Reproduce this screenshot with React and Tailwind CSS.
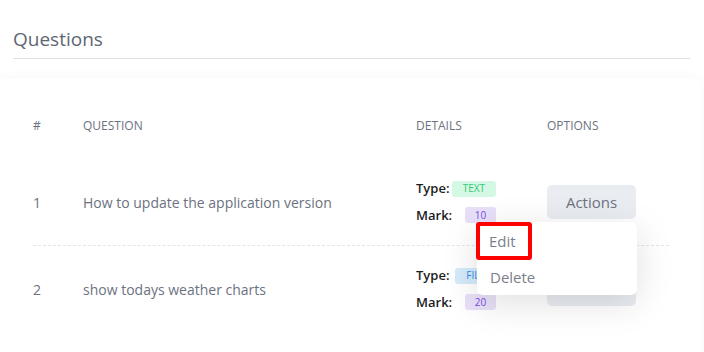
import React from 'react';

const questions = [
  { id: 1, text: 'How to update the application version', type: 'TEXT', mark: 10, typeClass: 'bg-[#d4f8e3] text-[#34c77b]' },
  { id: 2, text: 'show todays weather charts', type: 'FILE', mark: 20, typeClass: 'bg-[#d5ebfa] text-[#2e8ee8]' },
];

const Detail = ({ label, children }) => (
  <div className="flex w-[80px] items-center justify-between">
    <span className="text-[13px] font-semibold text-[#1b1d21]">{label}</span>
    {children}
  </div>
);

const ActionsMenu = () => (
  <div className="absolute right-[-1px] top-[37px] z-10 w-[160px] rounded-[6px] bg-white shadow-[0_8px_36px_rgba(0,0,0,0.13)]">
    <div className="flex h-[38px] items-center">
      <div className="ml-[-1px] flex h-[38px] w-[56px] items-center rounded-[3px] border-4 border-[#ff0000] pl-[9px] text-[15px] font-medium text-[#7b7f8b]">
        Edit
      </div>
    </div>
    <div className="flex h-[35px] items-center pl-[13px] text-[15px] font-medium text-[#7b7f8b]">Delete</div>
  </div>
);

const QuestionRow = ({ q, last, open }) => (
  <div
    className={`grid grid-cols-[50px_333px_131px_1fr] items-center ${
      last ? 'h-[86px]' : 'h-[87px] border-b border-dashed border-[#e3e5e9]'
    }`}
  >
    <span className="text-[14px] text-[#6c7280]">{q.id}</span>
    <span className="text-[14px] text-[#6c7280]">{q.text}</span>
    <div className="flex flex-col gap-[7px]">
      <Detail label="Type:">
        <span className={`flex h-[16px] items-center rounded-[3px] px-[11px] text-[10px] font-medium ${q.typeClass}`}>
          {q.type}
        </span>
      </Detail>
      <Detail label="Mark:">
        <span className="flex h-[16px] w-[31px] items-center justify-center rounded-[3px] bg-[#e8e0f8] text-[10px] font-medium text-[#7a4ce8]">
          {q.mark}
        </span>
      </Detail>
    </div>
    <div className="relative w-[89px]">
      <button className="flex h-[34px] w-[89px] items-center justify-center rounded-[5px] bg-[#e9edf2] text-[15px] font-medium text-[#6c7280]">
        Actions
      </button>
      {open && <ActionsMenu />}
    </div>
  </div>
);

export default function App() {
  return (
    <div className="h-[352px] w-[704px] overflow-hidden bg-white font-['Open_Sans',sans-serif]">
      <div className="pl-[13px] pr-[14px] pt-[27px]">
        <h2 className="border-b border-[#e0e0e0] pb-[6px] text-[19px] leading-[25px] text-[#5f6673]">Questions</h2>
      </div>
      <div className="mt-[19px] h-[300px] w-[701px] rounded-[6px] bg-white shadow-[0_0_14px_rgba(0,0,0,0.04)]">
        <div className="pl-[33px] pr-[32px] pt-[30px]">
          <div className="grid h-[36px] grid-cols-[50px_333px_131px_1fr] items-center text-[12px] uppercase text-[#6c7280]">
            <span>#</span>
            <span>Question</span>
            <span>Details</span>
            <span>Options</span>
          </div>
          <div className="mt-[15px]">
            {questions.map((q, i) => (
              <QuestionRow key={q.id} q={q} last={i === questions.length - 1} open={i === 0} />
            ))}
          </div>
        </div>
      </div>
    </div>
  );
}
